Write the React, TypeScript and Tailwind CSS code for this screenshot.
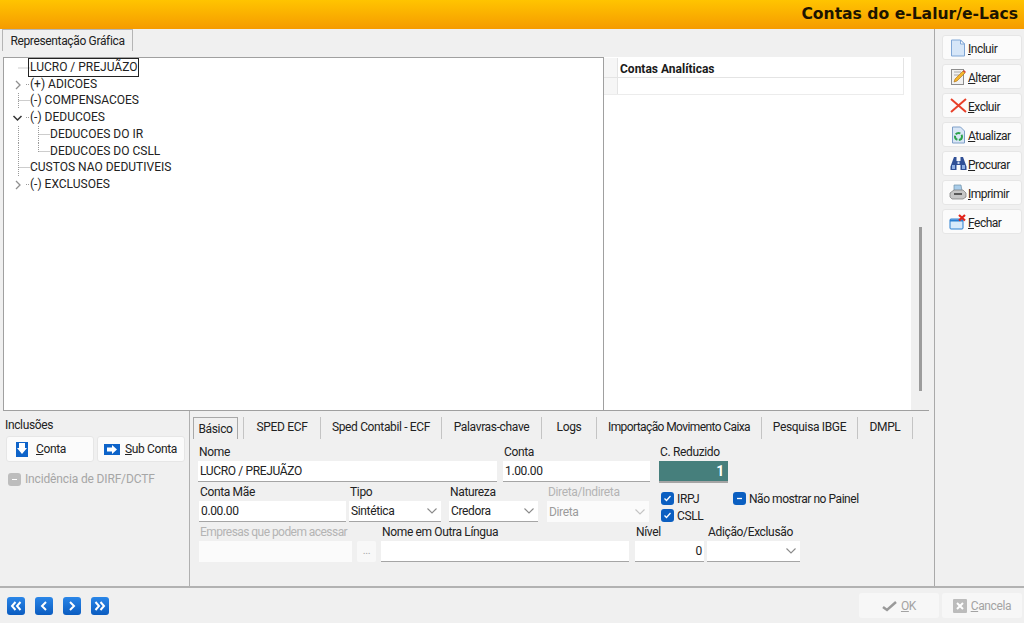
import type { ReactNode } from "react";

const font = "font-['Roboto',Arial,sans-serif]";

const tabs = [
  { label: "SPED ECF", w: "w-[77px]" },
  { label: "Sped Contabil - ECF", w: "w-[121px]" },
  { label: "Palavras-chave", w: "w-[100px]" },
  { label: "Logs", w: "w-[55px]" },
  { label: "Importação Movimento Caixa", w: "w-[165px] tracking-[-0.6px]" },
  { label: "Pesquisa IBGE", w: "w-[96px]" },
  { label: "DMPL", w: "w-[55px]" },
];

function Chevron({ disabled = false }: { disabled?: boolean }) {
  return (
    <svg width="12" height="8" viewBox="0 0 12 8" className="shrink-0">
      <path d="M1.5 1.5 6 6l4.500-4.500" fill="none" stroke={disabled ? "#c4c4c4" : "#8a8a8a"} strokeWidth="1.100" />
    </svg>
  );
}

// tree gutter: dotted connectors and expander for one row
function TreeRow({ text, gutter, selected }: { text: string; gutter: ReactNode; selected?: boolean }) {
  return (
    <div className="flex h-[16.750px] items-center">
      {gutter}
      <span className={selected ? "ml-[-2px] border border-[#222] px-px leading-[17px]" : "leading-[17px]"}>{text}</span>
    </div>
  );
}

const dots = { stroke: "#9a9a9a", strokeDasharray: "1 1", fill: "none" };

function Gutter({ w, d, exp }: { w: number; d: string; exp?: "open" | "closed" }) {
  return (
    <svg width={w} height="17" viewBox={`0 0 ${w} 17`} className="shrink-0">
      <path d={d} {...dots} />
      {exp === "closed" && <path d="M11 5l4 4-4 4" fill="none" stroke="#8f8f8f" strokeWidth="1.300" />}
      {exp === "open" && <path d="M8.500 7l4 4 4-4" fill="none" stroke="#333" strokeWidth="1.500" />}
    </svg>
  );
}

function Underlined({ first, rest }: { first: string; rest: string }) {
  return (
    <span>
      <span className="underline underline-offset-1">{first}</span>
      {rest}
    </span>
  );
}

function RailButton({ icon, first, rest }: { icon: ReactNode; first: string; rest: string }) {
  return (
    <div className="flex h-[25px] w-[80px] items-center gap-[1px] rounded-[3px] border border-[#e6e6e6] bg-[#fbfbfb] pl-[6px] text-[12px] tracking-[-0.5px] text-[#222]">
      <span className="flex w-[18px] shrink-0 justify-center">{icon}</span>
      <span className="pt-[2px]">
        <Underlined first={first} rest={rest} />
      </span>
    </div>
  );
}

function Field({ label, w, muted, children }: { label: string; w: string; muted?: boolean; children: ReactNode }) {
  return (
    <div className={`flex flex-col ${w}`}>
      <span className={`h-[15px] whitespace-nowrap pl-px text-[12px] leading-[13px] ${muted ? "text-[#b4b4b4]" : "text-[#222]"}`}>
        {label}
      </span>
      {children}
    </div>
  );
}

function Input({ value, right, disabled }: { value?: string; right?: boolean; disabled?: boolean }) {
  return (
    <div
      className={`flex h-[21px] items-center px-[2px] text-[12px] text-[#222] ${right ? "justify-end" : ""} ${
        disabled ? "bg-[#fbfbfb]" : "border-b border-[#a5a5a5] bg-white"
      }`}
    >
      {value}
    </div>
  );
}

function Select({ value, disabled }: { value?: string; disabled?: boolean }) {
  return (
    <div
      className={`flex h-[21px] items-center justify-between px-[2px] pr-[3px] text-[12px] ${
        disabled ? "bg-[#fbfbfb] text-[#9b9b9b]" : "border-b border-[#a5a5a5] bg-white text-[#222]"
      }`}
    >
      <span>{value}</span>
      <Chevron disabled={disabled} />
    </div>
  );
}

function Check({ label, minus, w }: { label: string; minus?: boolean; w?: string }) {
  return (
    <div className={`flex h-[17px] items-center gap-[3px] text-[12px] text-[#222] ${w ?? ""}`}>
      <span className="flex h-[13px] w-[13px] shrink-0 items-center justify-center rounded-[3px] bg-[#0b5fc1]">
        <svg width="11" height="11" viewBox="0 0 11 11">
          <path d={minus ? "M3 5.500h5" : "M2.500 5.500l2 2 4-4.500"} fill="none" stroke="#fff" strokeWidth="1.300" />
        </svg>
      </span>
      <span className="whitespace-nowrap">{label}</span>
    </div>
  );
}

function NavButton({ d }: { d: string }) {
  return (
    <div className="flex h-[18px] w-[18px] items-center justify-center rounded-[3px] bg-gradient-to-b from-[#2a86e8] to-[#0a5cc0]">
      <svg width="14" height="12" viewBox="0 0 14 12">
        <path d={d} fill="none" stroke="#fff" strokeWidth="2" />
      </svg>
    </div>
  );
}

function Doc() {
  return (
    <svg width="16" height="18" viewBox="0 0 16 18">
      <path d="M1.500 1h9l4 4v12h-13z" fill="#d6e6f8" stroke="#7fa6d6" />
      <path d="M10.500 1v4h4z" fill="#fff" stroke="#7fa6d6" />
    </svg>
  );
}

function EditIcon() {
  return (
    <svg width="17" height="18" viewBox="0 0 17 18">
      <rect x="1.500" y="1.500" width="12" height="15" fill="#f1f1f1" stroke="#8d8d8d" />
      <path d="M4 4h7M4 7h5" stroke="#a8a8a8" />
      <path d="M4 14l1-3 8-8 2 2-8 8z" fill="#f3b52c" stroke="#a86a10" strokeWidth=".6" />
      <path d="M13 3l1-1 2 2-1 1z" fill="#d8453a" />
    </svg>
  );
}

function XIcon() {
  return (
    <svg width="17" height="15" viewBox="0 0 17 15">
      <path d="M1 1l15 13M16 1 1 14" stroke="#e8402a" strokeWidth="2" fill="none" />
    </svg>
  );
}

function RefreshIcon() {
  return (
    <svg width="15" height="18" viewBox="0 0 15 18">
      <path d="M1.500 1h8l4 4v12h-12z" fill="#d9e6f6" stroke="#7f9fc8" />
      <circle cx="7.500" cy="10.500" r="3.500" fill="none" stroke="#2ba24a" strokeWidth="2" strokeDasharray="5 1.500" />
    </svg>
  );
}

function BinocularsIcon() {
  return (
    <svg width="17" height="15" viewBox="0 0 17 15">
      <path d="M4 1h2.500v4h4V1H13l3.500 9.500V14h-6V9h-4v5h-6v-3.500z" fill="#2f4f96" />
      <rect x="2" y="9" width="3" height="4" fill="#8fb0e4" />
      <rect x="12" y="9" width="3" height="4" fill="#8fb0e4" />
      <rect x="7.500" y="5.500" width="2" height="2.500" fill="#c9d6ee" />
    </svg>
  );
}

function PrinterIcon() {
  return (
    <svg width="18" height="17" viewBox="0 0 18 17">
      <path d="M5 1h7l1 6H5z" fill="#a9cdea" stroke="#6f8fa8" strokeWidth=".7" />
      <path d="M1 9l4-3h9l3 3v4l-3 2H3l-2-2z" fill="#c6c6c6" stroke="#777" strokeWidth=".7" />
      <path d="M5 10h8" stroke="#333" strokeWidth="1.500" />
    </svg>
  );
}

function CloseIcon() {
  return (
    <svg width="18" height="16" viewBox="0 0 18 16">
      <rect x="1" y="5" width="13" height="10" rx="1" fill="#d8eafa" stroke="#2a7fd0" />
      <path d="M1 5.500h13v2H1z" fill="#2a7fd0" />
      <path d="M10 1l6 5.500M16 1l-6 5.500" stroke="#e2231a" strokeWidth="2.200" />
    </svg>
  );
}

export default function App() {
  return (
    <div className={`flex h-[623px] w-[1024px] flex-col overflow-hidden bg-[#f0f0f0] tracking-[-0.35px] text-[#222] ${font}`}>
      {/* title bar */}
      <div className="flex h-[29px] shrink-0 items-center justify-end bg-gradient-to-b from-[#ffc400] to-[#f59b00] pr-[6px]">
        <span className="font-['DejaVu_Sans',sans-serif] text-[15.600px] font-bold tracking-normal text-[#1c1400]">Contas do e-Lalur/e-Lacs</span>
      </div>

      <div className="flex min-h-0 flex-1">
        {/* main area */}
        <div className="flex w-[935px] shrink-0 flex-col border-r border-[#a9a9a9]">
          <div className="flex h-[28px] shrink-0 items-start pl-[2px]">
            <div className="flex h-[22px] w-[131px] items-center justify-center border-t border-l border-r border-[#b5b5b5] text-[12px]">
              Representação Gráfica
            </div>
          </div>

          <div className="flex h-[354px] shrink-0 pl-[3px] pr-[5px]">
            {/* tree */}
            <div className="h-full w-[601px] shrink-0 border border-[#a0a0a0] bg-white pt-[1px] pl-px text-[12px] tracking-normal text-[#222]">
              <TreeRow selected text="LUCRO / PREJUÃZO" gutter={<Gutter w={25} d="M13.500 9h12" />} />
              <TreeRow text="(+) ADICOES" gutter={<Gutter w={25} exp="closed" d="M21 8.500h4" />} />
              <TreeRow text="(-) COMPENSACOES" gutter={<Gutter w={25} d="M13.500 1v16M13.500 8.500h12" />} />
              <TreeRow text="(-) DEDUCOES" gutter={<Gutter w={25} exp="open" d="M21 8.500h4" />} />
              <TreeRow text="DEDUCOES DO IR" gutter={<Gutter w={45} d="M13.500 0v17M33.500 0v17M33.500 8.500h12" />} />
              <TreeRow text="DEDUCOES DO CSLL" gutter={<Gutter w={45} d="M13.500 0v17M33.500 0v9M33.500 8.500h12" />} />
              <TreeRow text="CUSTOS NAO DEDUTIVEIS" gutter={<Gutter w={25} d="M13.500 0v17M13.500 8.500h12" />} />
              <TreeRow text="(-) EXCLUSOES" gutter={<Gutter w={25} exp="closed" d="M21 8.500h4" />} />
            </div>

            {/* accounts grid */}
            <div className="flex min-w-0 flex-1 border-b border-[#a0a0a0] bg-white">
              <div className="w-[300px] shrink-0 pt-px">
                <div className="flex h-[20px] border-b border-[#e4e4e4]">
                  <div className="w-[14px] border-r border-[#e4e4e4] bg-[#f6f6f6]" />
                  <div className="flex-1 pl-[2px] pt-px text-[12px] font-bold leading-[20px] tracking-normal text-[#1a1a1a]">Contas Analíticas</div>
                  <div className="w-px bg-[#e4e4e4]" />
                </div>
                <div className="flex h-[17px] border-b border-[#ececec]">
                  <div className="w-[14px] border-r border-[#e4e4e4] bg-[#f6f6f6]" />
                  <div className="flex-1" />
                  <div className="w-px bg-[#ececec]" />
                </div>
              </div>
              <div className="flex-1" />
              {/* scrollbar */}
              <div className="flex w-[18px] shrink-0 flex-col items-center bg-[#f0f0f0] pt-[170px]">
                <div className="h-[164px] w-[3px] bg-[#9c9c9c]" />
              </div>
            </div>
          </div>

          {/* bottom panels */}
          <div className="flex min-h-0 flex-1">
            <div className="w-[190px] shrink-0 border-r border-[#b0b0b0] pt-[7px]">
              <div className="pl-[5px] text-[12px] leading-[15px]">Inclusões</div>
              <div className="mt-[3px] flex gap-[3px] pl-[6px] text-[12px]">
                <div className="flex h-[26px] w-[88px] items-center gap-[8px] rounded-[3px] border border-[#e6e6e6] bg-[#fbfbfb] pl-[9px]">
                  <svg width="12" height="15" viewBox="0 0 12 15">
                    <rect width="12" height="15" fill="#0d63c9" />
                    <path d="M3 1h6v5h2L6 12 1 6h2z" fill="#fff" />
                  </svg>
                  <Underlined first="C" rest="onta" />
                </div>
                <div className="flex h-[26px] w-[88px] items-center gap-[5px] rounded-[3px] border border-[#e6e6e6] bg-[#fbfbfb] pl-[6px]">
                  <svg width="16" height="11" viewBox="0 0 16 11">
                    <rect width="16" height="11" fill="#0d63c9" />
                    <path d="M3 3.500h5V1l5 4.500-5 4.500V7.500H3z" fill="#fff" />
                  </svg>
                  <Underlined first="S" rest="ub Conta" />
                </div>
              </div>
              <div className="mt-[8px] flex items-center gap-[4px] pl-[8px] text-[12px] tracking-[-0.15px] text-[#a6a6a6]">
                <span className="flex h-[13px] w-[13px] items-center justify-center rounded-[3px] bg-[#bdbdbd]">
                  <span className="h-px w-[5px] bg-white" />
                </span>
                Incidência de DIRF/DCTF
              </div>
            </div>

            <div className="flex min-w-0 flex-1 flex-col pt-[6px]">
              <div className="flex h-[22px] items-stretch pl-[3px] text-[12px] text-[#222]">
                <div className="flex w-[45px] items-center justify-center border-t border-l border-r border-[#a8a8a8]">Básico</div>
                <div className="w-[6px] border-r border-[#c4c4c4]" />
                {tabs.map((t) => (
                  <div key={t.label} className={`flex ${t.w} items-center justify-center border-r border-[#c4c4c4] pb-[3px]`}>
                    {t.label}
                  </div>
                ))}
              </div>

              <div className="flex flex-col pl-[8px] pt-[7px]">
                <div className="flex">
                  <Field label="Nome" w="w-[299px]">
                    <Input value="LUCRO / PREJUÃZO" />
                  </Field>
                  <Field label="Conta" w="ml-[6px] w-[147px]">
                    <Input value="1.00.00" />
                  </Field>
                  <Field label="C. Reduzido" w="ml-[9px] w-[69px]">
                    <div className="flex h-[22px] items-center justify-end border-b-2 border-[#a5a5a5] bg-[#467f7c] pr-[4px] text-[14px] font-bold text-white">
                      1
                    </div>
                  </Field>
                </div>

                <div className="mt-[3px] flex">
                  <Field label="Conta Mãe" w="ml-px w-[147px]">
                    <Input value="0.00.00" />
                  </Field>
                  <Field label="Tipo" w="ml-[3px] w-[92px]">
                    <Select value="Sintética" />
                  </Field>
                  <Field label="Natureza" w="ml-[8px] w-[89px]">
                    <Select value="Credora" />
                  </Field>
                  <Field label="Direta/Indireta" w="ml-[9px] w-[102px]" muted>
                    <Select value="Direta" disabled />
                  </Field>
                  <div className="ml-[12px] flex flex-col pt-[4px]">
                    <Check label="IRPJ" w="w-[72px]" />
                    <Check label="CSLL" />
                  </div>
                  <div className="pt-[4px] tracking-[-0.45px]">
                    <Check label="Não mostrar no Painel" minus />
                  </div>
                </div>

                <div className="mt-[2px] flex">
                  <Field label="Empresas que podem acessar" w="ml-px w-[153px] tracking-[-0.55px]" muted>
                    <Input disabled />
                  </Field>
                  <div className="ml-[5px] mt-[15px] flex h-[21px] w-[19px] items-center justify-center rounded-[2px] bg-[#f8f8f8] text-[11px] text-[#a8a8a8]">
                    ...
                  </div>
                  <Field label="Nome em Outra Língua" w="ml-[5px] w-[248px]">
                    <Input />
                  </Field>
                  <Field label="Nível" w="ml-[6px] w-[69px]">
                    <Input value="0" right />
                  </Field>
                  <Field label="Adição/Exclusão" w="ml-[3px] w-[93px]">
                    <Select />
                  </Field>
                </div>
              </div>
            </div>
          </div>
        </div>

        {/* action rail */}
        <div className="flex flex-1 flex-col gap-[4px] pl-[7px] pt-[6px]">
          <RailButton icon={<Doc />} first="I" rest="ncluir" />
          <RailButton icon={<EditIcon />} first="A" rest="lterar" />
          <RailButton icon={<XIcon />} first="E" rest="xcluir" />
          <RailButton icon={<RefreshIcon />} first="A" rest="tualizar" />
          <RailButton icon={<BinocularsIcon />} first="P" rest="rocurar" />
          <RailButton icon={<PrinterIcon />} first="I" rest="mprimir" />
          <RailButton icon={<CloseIcon />} first="F" rest="echar" />
        </div>
      </div>

      {/* footer */}
      <div className="flex h-[37px] shrink-0 items-center justify-between border-t-2 border-[#b2b2b2] pl-[7px] pr-[2px]">
        <div className="flex gap-[10px]">
          <NavButton d="M6.500 2 3 6l3.500 4M11.500 2 8 6l3.500 4" />
          <NavButton d="M9 2 5 6l4 4" />
          <NavButton d="M5 2l4 4-4 4" />
          <NavButton d="M2.500 2 6 6l-3.500 4M7.500 2 11 6l-3.500 4" />
        </div>
        <div className="flex gap-[3px] text-[12px] text-[#a3a3a3]">
          <div className="flex h-[25px] w-[80px] items-center justify-center gap-[3px] rounded-[3px] bg-[#f7f7f7]">
            <svg width="16" height="12" viewBox="0 0 16 12">
              <path d="M1 7l4 3 9-8" fill="none" stroke="#9a9a9a" strokeWidth="2.500" />
            </svg>
            <Underlined first="O" rest="K" />
          </div>
          <div className="flex h-[25px] w-[80px] items-center justify-center gap-[4px] rounded-[3px] bg-[#f7f7f7]">
            <svg width="14" height="14" viewBox="0 0 14 14">
              <rect width="14" height="14" rx="1" fill="#bcbcbc" />
              <path d="M4 4l6 6M10 4l-6 6" stroke="#fff" strokeWidth="2" />
            </svg>
            <Underlined first="C" rest="ancela" />
          </div>
        </div>
      </div>
    </div>
  );
}
